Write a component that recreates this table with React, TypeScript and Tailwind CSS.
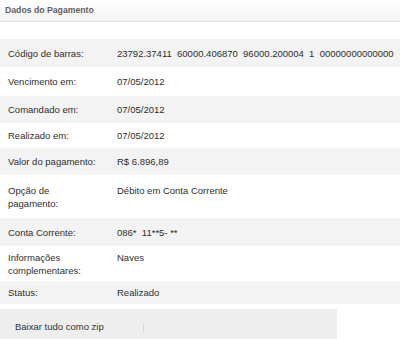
import React from "react";

type Row = { label: React.ReactNode; value: React.ReactNode; h: string; shade: boolean; pad?: string };

const rows: Row[] = [
  {
    label: "Código de barras:",
    value: "23792.37411\u00a0\u00a060000.406870\u00a0\u00a096000.200004\u00a0\u00a01\u00a0\u00a000000000000000",
    h: "h-[28px]",
    shade: true,
  },
  { label: "Vencimento em:", value: "07/05/2012", h: "h-[29px]", shade: false },
  { label: "Comandado em:", value: "07/05/2012", h: "h-[27px]", shade: true },
  { label: "Realizado em:", value: "07/05/2012", h: "h-[25px]", shade: false },
  { label: "Valor do pagamento:", value: "R$ 6.896,89", h: "h-[27px]", shade: true },
  {
    label: (
      <>
        Opção de
        <br />
        pagamento:
      </>
    ),
    value: "Débito em Conta Corrente",
    h: "h-[43px]",
    shade: false,
    pad: "items-start pt-[9px]",
  },
  { label: "Conta Corrente:", value: "086*\u00a0\u00a011**5-\u00a0**", h: "h-[28px]", shade: true },
  {
    label: (
      <>
        Informações
        <br />
        complementares:
      </>
    ),
    value: "Naves",
    h: "h-[35px]",
    shade: false,
    pad: "items-start pt-[5px]",
  },
  { label: "Status:", value: "Realizado", h: "h-[23px]", shade: true },
];

const App = () => {
  return (
    <div
      className="w-[400px] h-[339px] bg-white overflow-hidden text-[#2e2e2e]"
      style={{ fontFamily: '"Liberation Sans", Arial, sans-serif' }}
    >
      {/* Header */}
      <div className="h-[22px] border-b border-[#e2e2e2] bg-gradient-to-b from-white to-[#f3f3f3] flex items-center pl-[5px]">
        <span className="text-[8.7px] font-bold text-[#5e5e5e]">Dados do Pagamento</span>
      </div>

      <div className="mt-[17px]">
        {rows.map((r, i) => (
          <div
            key={i}
            className={`flex ${r.h} ${r.pad ?? "items-center"} ${
              r.shade ? "bg-[#f3f3f3]" : "bg-white"
            } text-[9.5px] leading-[13px]`}
          >
            <div className="w-[117px] pl-[8px] shrink-0">{r.label}</div>
            <div className="whitespace-nowrap">{r.value}</div>
          </div>
        ))}
      </div>

      {/* Download bar */}
      <div className="mt-[5px] w-[337px] h-[30px] bg-[#eeeeee] flex items-center">
        <span className="pl-[15px] pt-[6px] text-[9.5px] text-[#333]">Baixar tudo como zip</span>
        <div className="ml-[39px] mt-[8px] w-px h-[9px] bg-[#d8d8d8]"></div>
      </div>
    </div>
  );
};

export default App;
